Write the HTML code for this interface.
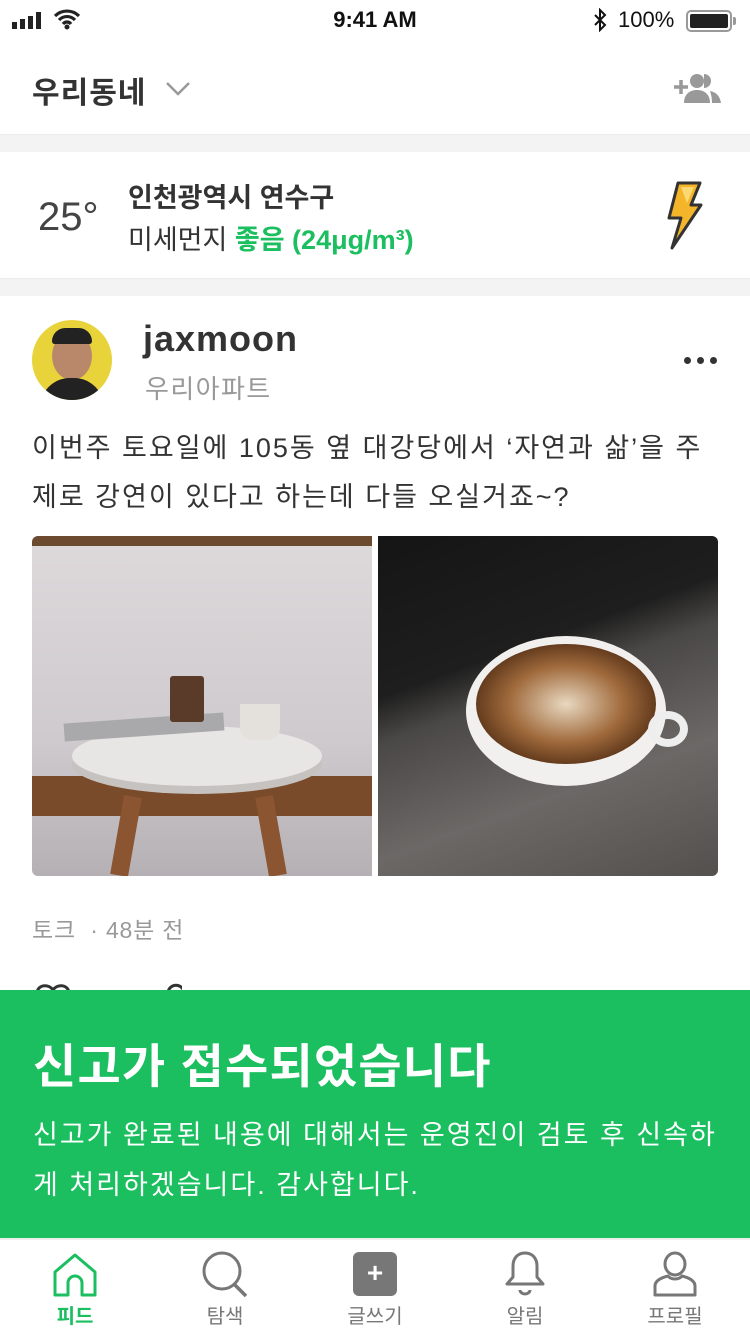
<!DOCTYPE html>
<html><head><meta charset="utf-8"><style>
*{margin:0;padding:0;box-sizing:border-box}
body{width:750px;height:1334px;position:relative;overflow:hidden;background:#fff;font-family:"Liberation Sans","Noto Sans CJK KR",sans-serif;color:#333}
.a{position:absolute;white-space:nowrap}
</style></head><body>
<div class="a" style="left:12px;top:12px;display:flex;align-items:flex-end;gap:3px">
<div style="width:5px;height:7px;background:#222"></div><div style="width:5px;height:10px;background:#222"></div><div style="width:5px;height:13px;background:#222"></div><div style="width:5px;height:17px;background:#222"></div></div>
<svg class="a" style="left:52px;top:8px" width="30" height="22" viewBox="0 0 30 22"><path d="M3 8a17 17 0 0 1 24 0M7 12a11 11 0 0 1 16 0M11 16a5 5 0 0 1 8 0" stroke="#222" stroke-width="3.2" fill="none"/><circle cx="15" cy="19" r="2.5" fill="#222"/></svg>
<div class="a" style="left:0;width:750px;text-align:center;top:7px;font-size:22px;font-weight:bold;color:#111">9:41 AM</div>
<svg class="a" style="left:592px;top:8px" width="16" height="24" viewBox="0 0 16 24"><path d="M3 7l10 10-5 5V2l5 5L3 17" stroke="#111" stroke-width="2" fill="none"/></svg>
<div class="a" style="left:618px;top:7px;font-size:22px;color:#111">100%</div>
<div class="a" style="left:686px;top:10px;width:46px;height:22px;border:2px solid #999;border-radius:5px;padding:2px"><div style="width:100%;height:100%;background:#222;border-radius:2px"></div></div>
<div class="a" style="left:733px;top:17px;width:3px;height:8px;background:#999;border-radius:0 2px 2px 0"></div>
<div class="a" style="left:32px;top:68px;font-size:30px;font-weight:bold;color:#333;letter-spacing:1px">우리동네</div>
<svg class="a" style="left:165px;top:80px" width="26" height="18"><path d="M2 3l11 11 11-11" stroke="#999" stroke-width="2.5" fill="none"/></svg>
<svg class="a" style="left:672px;top:70px" width="52" height="34" viewBox="0 0 52 34"><path d="M2 17h14M9 10v14" stroke="#999" stroke-width="3.5"/><circle cx="25" cy="11" r="7" fill="#999"/><path d="M12 33c0-9 6-13 13-13s13 4 13 13z" fill="#999"/><path d="M32 4a7 7 0 0 1 0 14" fill="#999"/><path d="M38 21c6 1 10 5 11 12h-9c0-5-1-9-2-12z" fill="#999"/></svg>
<div class="a" style="left:0;top:134px;width:750px;height:18px;background:#f3f3f3;border-top:1px solid #eaeaea"></div>
<div class="a" style="left:38px;top:195px;font-size:40px;font-weight:300;color:#444">25°</div>
<div class="a" style="left:128px;top:176px;font-size:27px;font-weight:bold;color:#333">인천광역시 연수구</div>
<div class="a" style="left:128px;top:218px;font-size:27px;color:#333">미세먼지 <span style="color:#1bbf5f;font-weight:bold">좋음 (24μg/m³)</span></div>
<svg class="a" style="left:664px;top:180px" width="42" height="70" viewBox="0 0 42 70"><path d="M14 3h22l-9 22h10L8 68l9-30H5z" fill="#f5b52a" stroke="#333" stroke-width="3" stroke-linejoin="round"/><path d="M17 7h13l-7 16" fill="#fcd873"/></svg>
<div class="a" style="left:0;top:278px;width:750px;height:18px;background:#f3f3f3;border-top:1px solid #eaeaea"></div>
<div class="a" style="left:32px;top:320px;width:80px;height:80px;border-radius:50%;background:#e8d33a;overflow:hidden">
<div style="position:absolute;left:20px;top:12px;width:40px;height:48px;border-radius:50%;background:#b9876a"></div>
<div style="position:absolute;left:20px;top:8px;width:40px;height:16px;border-radius:20px 20px 4px 4px;background:#222"></div>
<div style="position:absolute;left:8px;top:58px;width:64px;height:40px;border-radius:30px 30px 0 0;background:#222"></div></div>
<div class="a" style="left:143px;top:318px;font-size:36px;font-weight:bold;color:#333;letter-spacing:1px">jaxmoon</div>
<div class="a" style="left:145px;top:369px;font-size:26px;color:#999;letter-spacing:1.4px">우리아파트</div>
<div class="a" style="left:684px;top:357px;display:flex;gap:6px"><i style="width:7px;height:7px;border-radius:50%;background:#333"></i><i style="width:7px;height:7px;border-radius:50%;background:#333"></i><i style="width:7px;height:7px;border-radius:50%;background:#333"></i></div>
<div class="a" style="left:32px;top:424px;font-size:27px;line-height:49px;color:#333;letter-spacing:2px">이번주 토요일에 105동 옆 대강당에서 ‘자연과 삶’을 주<br>제로 강연이 있다고 하는데 다들 오실거죠~?</div>
<div class="a" style="left:32px;top:536px;width:340px;height:340px;border-radius:6px 0 0 6px;overflow:hidden;background:linear-gradient(180deg,#6b4a30 0,#6b4a30 10px,#ddd8da 10px,#cfcace 60%,#b5b0b4 100%)">
<div style="position:absolute;left:0;top:240px;width:340px;height:40px;background:#7a4b2a"></div>
<div style="position:absolute;left:40px;top:190px;width:250px;height:60px;border-radius:50%;background:#e8e6e4;box-shadow:0 8px 0 #c6c2c0"></div>
<div style="position:absolute;left:85px;top:260px;width:18px;height:80px;background:#8a5530;transform:rotate(10deg)"></div>
<div style="position:absolute;left:230px;top:260px;width:18px;height:80px;background:#8a5530;transform:rotate(-10deg)"></div>
<div style="position:absolute;left:32px;top:182px;width:160px;height:18px;background:#a9a9ab;transform:rotate(-4deg)"></div>
<div style="position:absolute;left:138px;top:140px;width:34px;height:46px;background:#5a3a28;border-radius:3px"></div>
<div style="position:absolute;left:208px;top:168px;width:40px;height:36px;background:#e4e0dc;border-radius:0 0 12px 12px"></div></div>
<div class="a" style="left:378px;top:536px;width:340px;height:340px;border-radius:0 6px 6px 0;overflow:hidden;background:linear-gradient(160deg,#151515 0,#1e1e1e 35%,#4a4846 45%,#6b6866 70%,#54504d 100%)">
<div style="position:absolute;left:88px;top:100px;width:200px;height:150px;border-radius:50%;background:#f2f0ee"></div>
<div style="position:absolute;left:98px;top:108px;width:180px;height:120px;border-radius:50%;background:radial-gradient(ellipse,#e8d8c0 0,#a06a3c 45%,#5a3418 75%)"></div>
<div style="position:absolute;left:270px;top:175px;width:40px;height:36px;border:8px solid #eee;border-radius:50%"></div></div>
<div class="a" style="left:32px;top:911px;font-size:23px;color:#999;letter-spacing:0.8px">토크 &nbsp;· 48분 전</div>
<svg class="a" style="left:32px;top:982px" width="150" height="10"><path d="M5 10c2-8 12-8 16-2c4-6 14-6 16 2" stroke="#333" stroke-width="3" fill="none"/><path d="M136 10c2-9 14-9 16 0" stroke="#333" stroke-width="3" fill="none"/></svg>
<div class="a" style="left:0;top:990px;width:750px;height:248px;background:#1bbf5f"></div>
<div class="a" style="left:33px;top:1028px;font-size:47px;font-weight:bold;color:#fff;letter-spacing:1.2px">신고가 접수되었습니다</div>
<div class="a" style="left:33px;top:1110px;font-size:27px;line-height:50px;color:#fff;letter-spacing:2px">신고가 완료된 내용에 대해서는 운영진이 검토 후 신속하<br>게 처리하겠습니다. 감사합니다.</div>
<div class="a" style="left:0;top:1238px;width:750px;height:96px;background:#fff;border-top:2px solid #eee"></div>
<svg class="a" style="left:52px;top:1252px" width="46" height="46" viewBox="0 0 46 46"><path d="M3 20L23 3l20 17v23H30V31a7 7 0 0 0-14 0v12H3z" stroke="#1bbf5f" stroke-width="3" fill="none" stroke-linejoin="round"/></svg>
<div class="a" style="left:0;width:150px;text-align:center;top:1300px;font-size:20px;font-weight:bold;color:#1bbf5f">피드</div>
<svg class="a" style="left:200px;top:1250px" width="50" height="48" viewBox="0 0 50 48"><circle cx="22" cy="21" r="18" stroke="#777" stroke-width="3" fill="none"/><path d="M34 34l12 12" stroke="#777" stroke-width="3.5"/></svg>
<div class="a" style="left:150px;width:150px;text-align:center;top:1300px;font-size:20px;color:#777">탐색</div>
<div class="a" style="left:353px;top:1252px;width:44px;height:44px;border-radius:6px;background:#777;color:#fff;font-size:28px;font-weight:bold;text-align:center;line-height:42px">+</div>
<div class="a" style="left:300px;width:150px;text-align:center;top:1300px;font-size:20px;color:#777">글쓰기</div>
<svg class="a" style="left:504px;top:1250px" width="42" height="48" viewBox="0 0 42 48"><path d="M21 3c-8 0-12 6-12 13v11l-6 7h36l-6-7V16c0-7-4-13-12-13z" stroke="#777" stroke-width="3" fill="none" stroke-linejoin="round"/><path d="M16 40a5 4 0 0 0 10 0" stroke="#777" stroke-width="3" fill="none"/></svg>
<div class="a" style="left:450px;width:150px;text-align:center;top:1300px;font-size:20px;color:#777">알림</div>
<svg class="a" style="left:652px;top:1250px" width="46" height="48" viewBox="0 0 46 48"><ellipse cx="23" cy="14" rx="10" ry="11" stroke="#777" stroke-width="3" fill="none"/><path d="M16 26c-8 2-13 5-13 10v9h40v-9c0-5-5-8-13-10c-3 4-11 4-14 0z" stroke="#777" stroke-width="3" fill="none" stroke-linejoin="round"/></svg>
<div class="a" style="left:600px;width:150px;text-align:center;top:1300px;font-size:20px;color:#777">프로필</div>
</body></html>
